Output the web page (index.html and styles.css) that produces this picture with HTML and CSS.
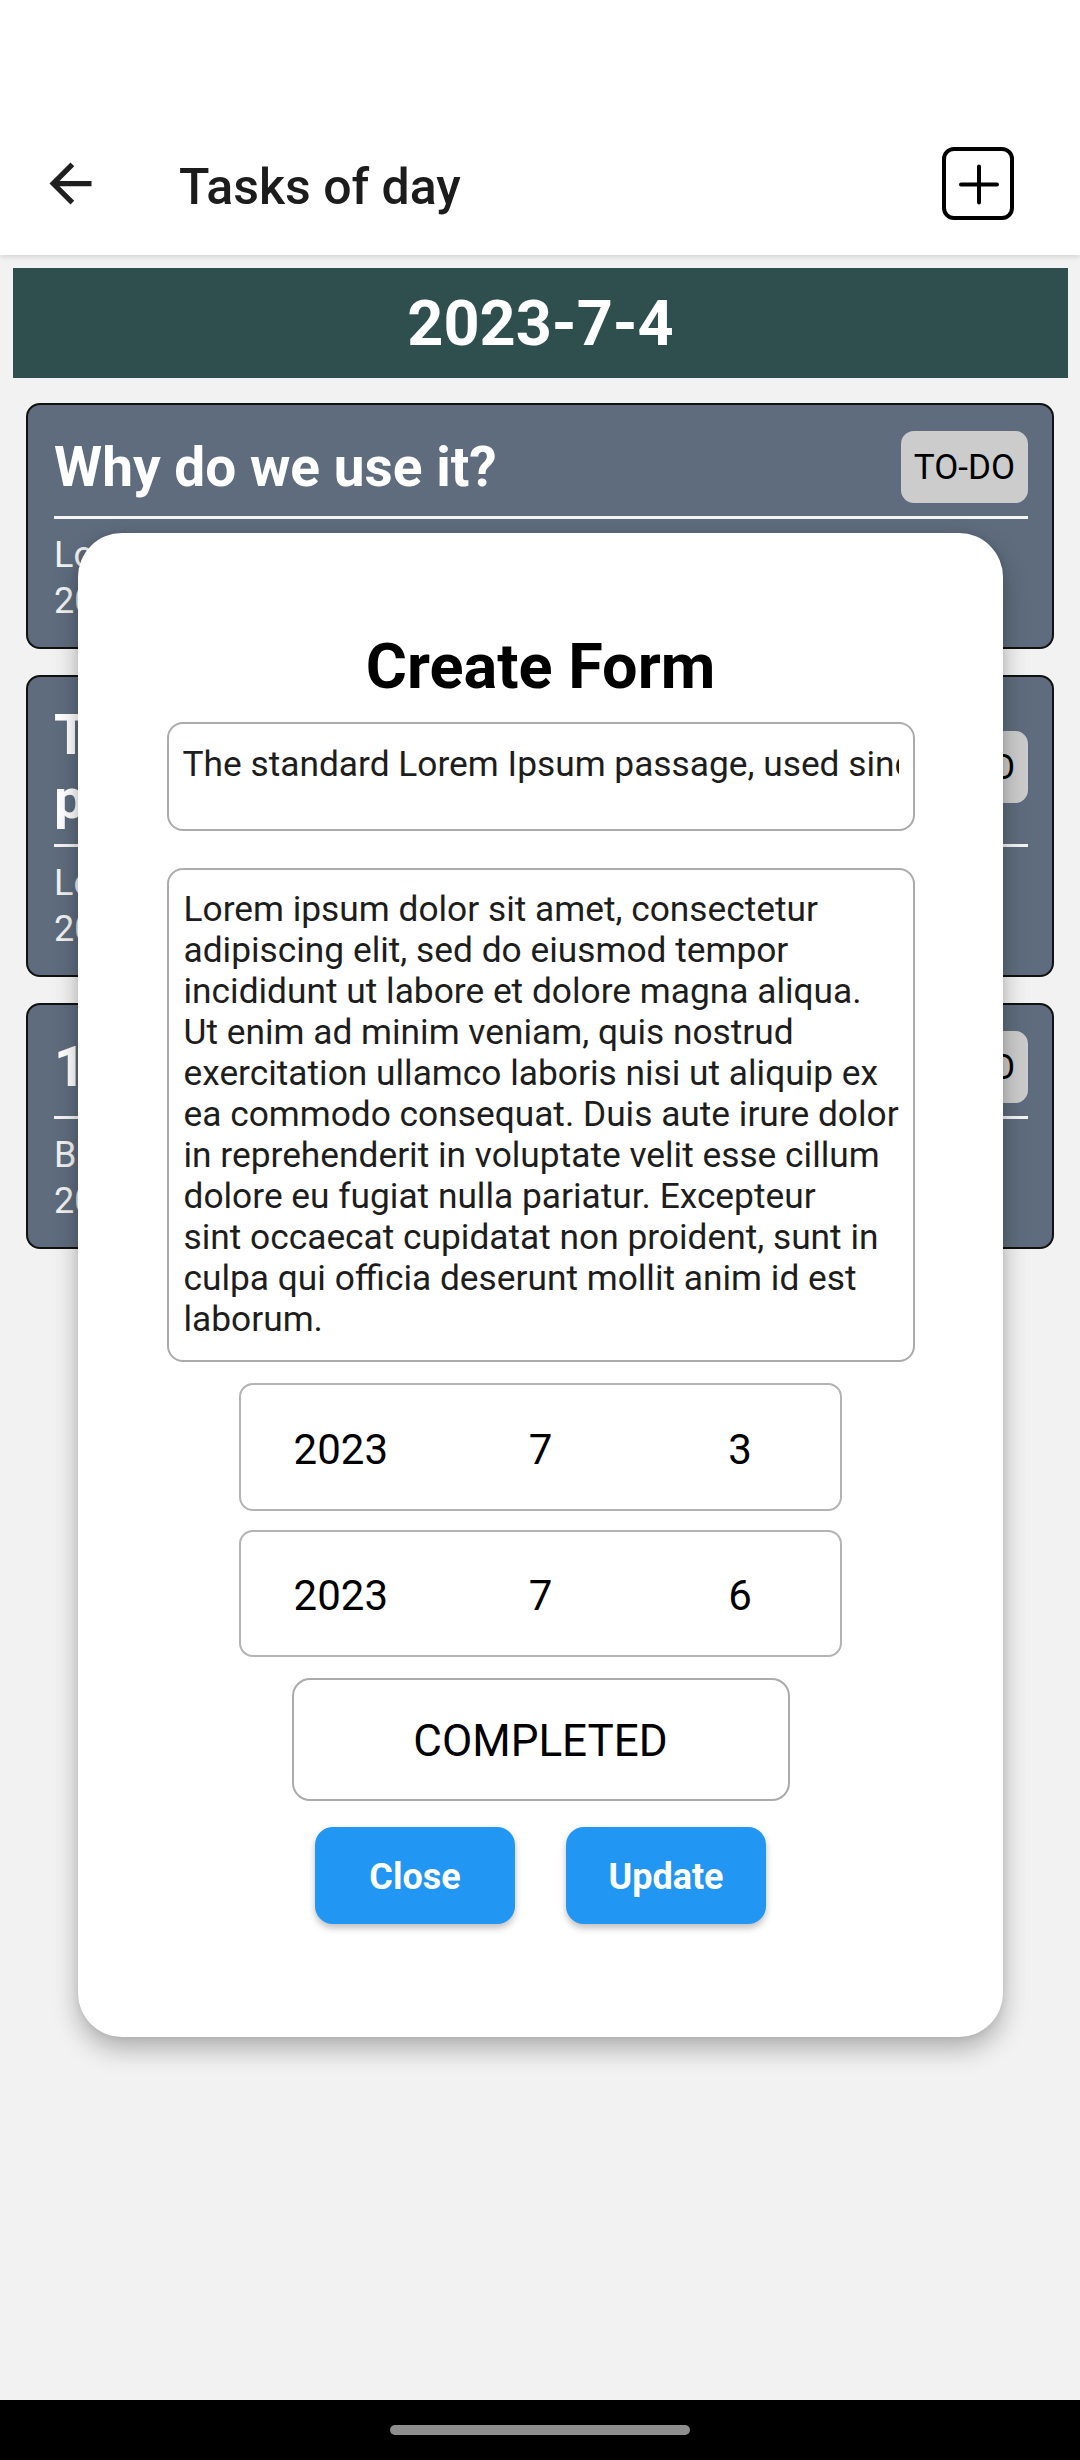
FILE: index.html
```html
<!DOCTYPE html>
<html lang="en">
<head>
<meta charset="utf-8">
<title>Tasks of day</title>
<link rel="stylesheet" href="styles.css">
</head>
<body>
<div class="screen">
  <header class="appbar">
    <svg class="back" width="63" height="63" viewBox="0 0 24 24"><path d="M20 11H7.83l5.59-5.59L12 4l-8 8 8 8 1.41-1.41L7.83 13H20v-2z" fill="#1f1f1f"/></svg>
    <div class="appbar-title">Tasks of day</div>
    <svg class="add" width="72" height="73" viewBox="0 0 72 73"><rect x="2" y="2" width="68" height="69" rx="10" fill="none" stroke="#000" stroke-width="4"/><path d="M19 37.5H55M37 19.5V55.5" stroke="#000" stroke-width="4" stroke-linecap="round"/></svg>
  </header>

  <main class="content">
    <div class="banner">2023-7-4</div>
    <div class="cards">
      <div class="card">
        <div class="card-head">
          <div class="card-title">Why do we use it?</div>
          <div class="badge">TO-DO</div>
        </div>
        <div class="divider"></div>
        <div class="card-body">Lorem ipsum is a placeholder text commonly used</div>
        <div class="card-body">2023-7-1 ~ 2023-7-5</div>
      </div>
      <div class="card">
        <div class="card-head">
          <div class="card-title">The standard Lorem Ipsum passage, used since the 1500s</div>
          <div class="badge">TO-DO</div>
        </div>
        <div class="divider"></div>
        <div class="card-body">Lorem ipsum dolor sit amet, consectetur adipiscing</div>
        <div class="card-body">2023-7-3 ~ 2023-7-6</div>
      </div>
      <div class="card">
        <div class="card-head">
          <div class="card-title">1914 translation</div>
          <div class="badge">TO-DO</div>
        </div>
        <div class="divider"></div>
        <div class="card-body">But I must explain to you how all this mistaken idea</div>
        <div class="card-body">2023-7-2 ~ 2023-7-4</div>
      </div>
    </div>
  </main>

  <div class="navbar"><div class="handle"></div></div>

  <div class="modal">
    <div class="modal-title">Create Form</div>
    <div class="field field-title"><div class="field-clip">The standard Lorem Ipsum passage, used since the 1500s</div></div>
    <div class="field field-desc">
      <span class="ln">Lorem ipsum dolor sit amet, consectetur</span>
      <span class="ln">adipiscing elit, sed do eiusmod tempor</span>
      <span class="ln">incididunt ut labore et dolore magna aliqua.</span>
      <span class="ln">Ut enim ad minim veniam, quis nostrud</span>
      <span class="ln">exercitation ullamco laboris nisi ut aliquip ex</span>
      <span class="ln">ea commodo consequat. Duis aute irure dolor</span>
      <span class="ln">in reprehenderit in voluptate velit esse cillum</span>
      <span class="ln">dolore eu fugiat nulla pariatur. Excepteur</span>
      <span class="ln">sint occaecat cupidatat non proident, sunt in</span>
      <span class="ln">culpa qui officia deserunt mollit anim id est</span>
      <span class="ln">laborum.</span>
    </div>
    <div class="picker picker-start"><span>2023</span><span>7</span><span>3</span></div>
    <div class="picker picker-end"><span>2023</span><span>7</span><span>6</span></div>
    <div class="status">COMPLETED</div>
    <div class="actions">
      <div class="btn">Close</div>
      <div class="btn">Update</div>
    </div>
  </div>
</div>
</body>
</html>
```

FILE: styles.css
```css
* { box-sizing: border-box; }
html, body { margin: 0; padding: 0; }
body {
  font-family: Roboto, "Noto Sans", "Liberation Sans", sans-serif;
  background: #f2f2f2;
}
.screen {
  position: relative;
  width: 1080px;
  height: 2460px;
  display: flex;
  flex-direction: column;
  background: #f2f2f2;
  overflow: hidden;
}

/* App bar */
.appbar {
  height: 255px;
  padding-top: 112px;
  background: #fff;
  display: flex;
  align-items: center;
  box-shadow: 0 2px 5px rgba(0,0,0,0.12);
  position: relative;
  z-index: 1;
}
.back { margin-left: 39px; flex: none; }
.appbar-title {
  margin-left: 77px;
  margin-top: 6px;
  font-size: 50px;
  font-weight: 500;
  color: #1c1c1c;
  flex: 1;
}
.add { margin-right: 66px; flex: none; }

/* Content */
.content {
  flex: 1;
  padding: 13px 12px 0 13px;
}
.banner {
  height: 110px;
  background: #2f4f4f;
  color: #fff;
  font-size: 63px;
  font-weight: 700;
  display: flex;
  align-items: center;
  justify-content: center;
}
.cards {
  padding: 25px 14px 0 13px;
  display: flex;
  flex-direction: column;
  gap: 26px;
}
.card {
  background: #5e6c7d;
  border: 2px solid #111;
  border-radius: 14px;
  padding: 26px 24px 23px 26px;
  color: #fff;
}
.card-head {
  display: flex;
  align-items: center;
  gap: 20px;
}
.card-title {
  flex: 1;
  font-size: 55px;
  line-height: 64px;
  font-weight: 700;
  display: -webkit-box;
  -webkit-line-clamp: 2;
  -webkit-box-orient: vertical;
  overflow: hidden;
}
.badge {
  flex: none;
  background: #cccccc;
  color: #000;
  border-radius: 13px;
  font-size: 35px;
  height: 72px;
  padding: 0 13px;
  display: flex;
  align-items: center;
}
.divider {
  height: 3px;
  background: #f4f4f4;
  margin: 13px 0 13px;
}
.card-body {
  font-size: 36px;
  line-height: 46px;
  color: #f2f2f2;
  white-space: nowrap;
  overflow: hidden;
  text-overflow: ellipsis;
}

/* Bottom navigation */
.navbar {
  height: 60px;
  background: #000;
  display: flex;
  align-items: center;
  justify-content: center;
  flex: none;
}
.handle {
  width: 300px;
  height: 10px;
  border-radius: 5px;
  background: #8e8e8e;
}

/* Modal */
.modal {
  position: absolute;
  left: 78px;
  top: 533px;
  width: 925px;
  height: 1504px;
  background: #fff;
  border-radius: 44px;
  box-shadow: 0 12px 26px rgba(0,0,0,0.28), 0 0 8px rgba(0,0,0,0.08);
  z-index: 5;
  display: flex;
  flex-direction: column;
  align-items: center;
  padding-top: 97px;
}
.modal-title {
  font-size: 63px;
  font-weight: 700;
  color: #000;
}
.field {
  width: 748px;
  border: 2px solid #ababab;
  border-radius: 16px;
  font-size: 35.3px;
  color: #1d1d1d;
}
.field-title {
  margin-top: 19px;
  height: 109px;
  padding: 19px 14px 0 14px;
}
.field-clip {
  white-space: nowrap;
  overflow: hidden;
}
.field-desc {
  margin-top: 37px;
  height: 494px;
  padding: 19px 14px 0 15px;
  line-height: 41px;
}
.ln { display: block; white-space: nowrap; }

.picker {
  width: 603px;
  height: 128px;
  border: 2px solid #b3b3b3;
  border-radius: 14px;
  display: grid;
  grid-template-columns: 1fr 1fr 1fr;
  align-items: center;
  justify-items: center;
  font-size: 42px;
  color: #000;
  padding-top: 4px;
}
.picker-start { margin-top: 21px; }
.picker-end { margin-top: 19px; height: 127px; }

.status {
  margin-top: 21px;
  width: 498px;
  height: 123px;
  border: 2px solid #ababab;
  border-radius: 18px;
  display: flex;
  align-items: center;
  justify-content: center;
  font-size: 44px;
  color: #000;
  padding-top: 3px;
}
.actions {
  margin-top: 26px;
  display: flex;
  gap: 51px;
}
.btn {
  width: 200px;
  height: 97px;
  background: #2196f3;
  color: #fff;
  border-radius: 18px;
  font-size: 36px;
  font-weight: 700;
  display: flex;
  align-items: center;
  justify-content: center;
  padding-top: 2px;
  box-shadow: 0 4px 7px rgba(0,0,0,0.25);
}
```
